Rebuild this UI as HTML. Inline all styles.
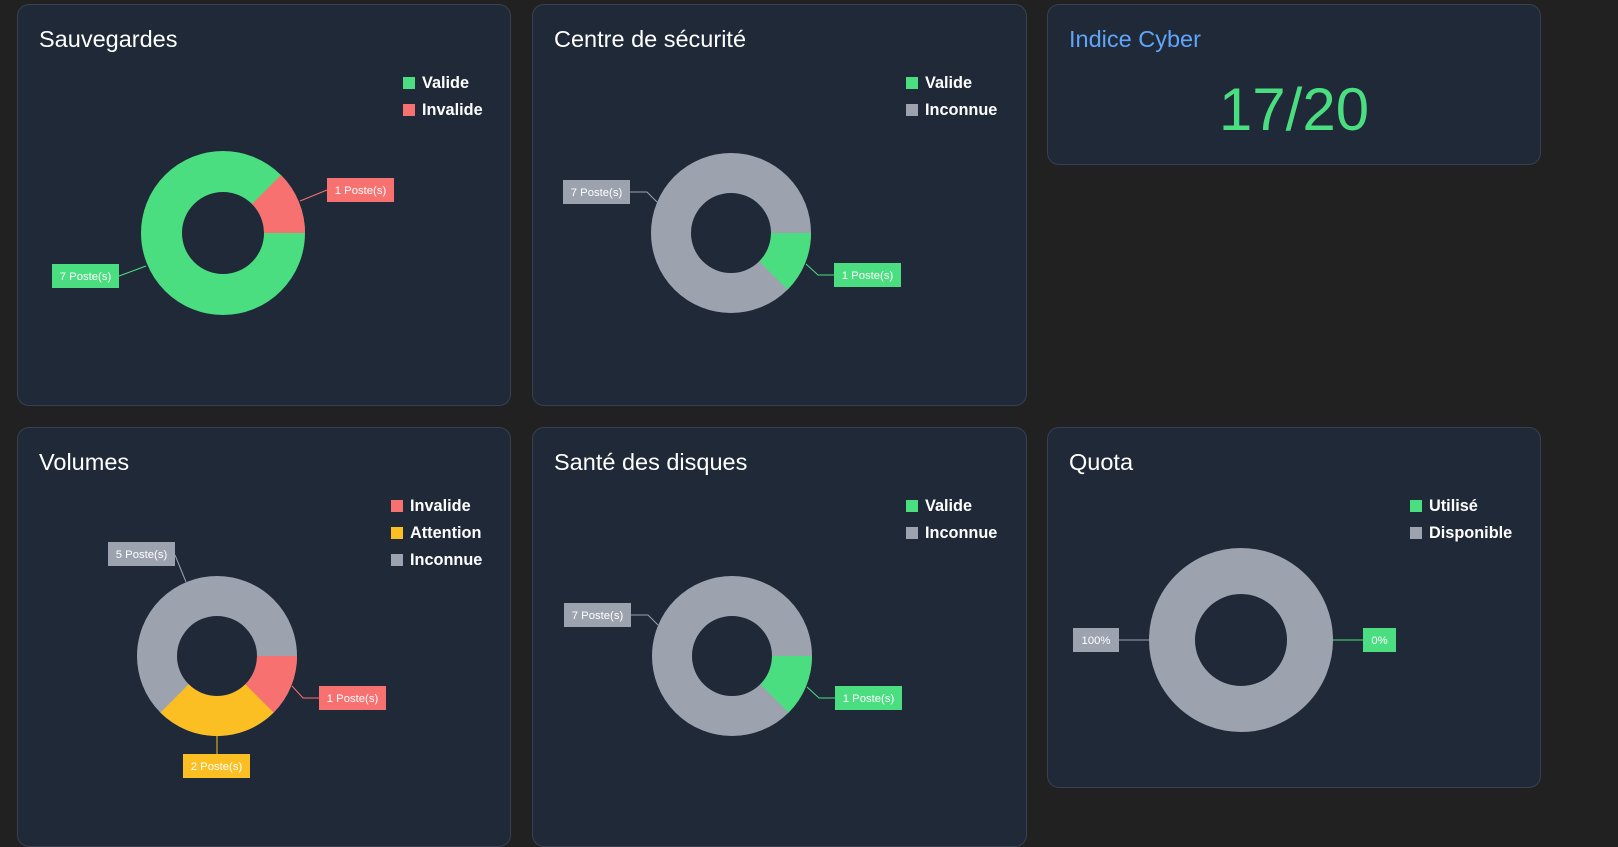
<!DOCTYPE html>
<html><head><meta charset="utf-8"><style>
html,body{margin:0;padding:0;background:#212121;width:1618px;height:817px;overflow:hidden;font-family:"Liberation Sans",Arial,sans-serif}
.card{position:absolute;background:#1f2937;border:1px solid #374151;border-radius:12px;box-sizing:border-box}
.t{position:absolute;left:21px;top:21px;font-size:23.5px;color:#fff}
svg{position:absolute;left:0;top:0}
</style></head><body>
<div class="card" style="left:17px;top:4px;width:494px;height:402px"><div class="t">Sauvegardes</div></div>
<div class="card" style="left:532px;top:4px;width:495px;height:402px"><div class="t">Centre de sécurité</div></div>
<div class="card" style="left:1047px;top:4px;width:494px;height:161px"><div class="t" style="color:#60a5fa">Indice Cyber</div>
<div style="position:absolute;left:0;right:0;top:70px;text-align:center;color:#4ade80;font-size:60px">17/20</div></div>
<div class="card" style="left:17px;top:427px;width:494px;height:420px"><div class="t">Volumes</div></div>
<div class="card" style="left:532px;top:427px;width:495px;height:420px"><div class="t">Santé des disques</div></div>
<div class="card" style="left:1047px;top:427px;width:494px;height:361px"><div class="t">Quota</div></div>
<svg width="1618" height="817" font-family="Liberation Sans, Arial, sans-serif">
<g font-size="16.3" font-weight="bold" fill="#fff">
<rect x="403" y="77" width="12" height="12" fill="#4ade80"/><text x="422" y="88">Valide</text>
<rect x="403" y="104" width="12" height="12" fill="#f87171"/><text x="422" y="115">Invalide</text>
<rect x="906" y="77" width="12" height="12" fill="#4ade80"/><text x="925" y="88">Valide</text>
<rect x="906" y="104" width="12" height="12" fill="#9ca3af"/><text x="925" y="115">Inconnue</text>
<rect x="391" y="500" width="12" height="12" fill="#f87171"/><text x="410" y="511">Invalide</text>
<rect x="391" y="527" width="12" height="12" fill="#fbbf24"/><text x="410" y="538">Attention</text>
<rect x="391" y="554" width="12" height="12" fill="#9ca3af"/><text x="410" y="565">Inconnue</text>
<rect x="906" y="500" width="12" height="12" fill="#4ade80"/><text x="925" y="511">Valide</text>
<rect x="906" y="527" width="12" height="12" fill="#9ca3af"/><text x="925" y="538">Inconnue</text>
<rect x="1410" y="500" width="12" height="12" fill="#4ade80"/><text x="1429" y="511">Utilisé</text>
<rect x="1410" y="527" width="12" height="12" fill="#9ca3af"/><text x="1429" y="538">Disponible</text>
</g>
<circle cx="223" cy="233" r="61.5" fill="none" stroke="#4ade80" stroke-width="41"/>
<path d="M305 233 A82 82 0 0 0 281 175 L252 204 A41 41 0 0 1 264 233 Z" fill="#f87171"/>
<circle cx="731" cy="233" r="60" fill="none" stroke="#9ca3af" stroke-width="40"/>
<path d="M811 233 A80 80 0 0 1 787.6 289.6 L759.3 261.3 A40 40 0 0 0 771 233 Z" fill="#4ade80"/>
<circle cx="732" cy="656" r="60" fill="none" stroke="#9ca3af" stroke-width="40"/>
<path d="M812 656 A80 80 0 0 1 788.6 712.6 L760.3 684.3 A40 40 0 0 0 772 656 Z" fill="#4ade80"/>
<circle cx="217" cy="656" r="60" fill="none" stroke="#9ca3af" stroke-width="40"/>
<path d="M297 656 A80 80 0 0 1 273.6 712.6 L245.3 684.3 A40 40 0 0 0 257 656 Z" fill="#f87171"/>
<path d="M273.6 712.6 A80 80 0 0 1 160.4 712.6 L188.7 684.3 A40 40 0 0 0 245.3 684.3 Z" fill="#fbbf24"/>
<circle cx="1241" cy="640" r="69" fill="none" stroke="#9ca3af" stroke-width="46"/>
<g fill="none" stroke-width="1">
<polyline points="300,201 327,190" stroke="#f87171"/>
<polyline points="119,276 146,266" stroke="#4ade80"/>
<polyline points="630,192 647,192 657,202" stroke="#9ca3af"/>
<polyline points="806,264 818,275 834,275" stroke="#4ade80"/>
<polyline points="631,615 648,615 658,625" stroke="#9ca3af"/>
<polyline points="807,687 819,698 835,698" stroke="#4ade80"/>
<polyline points="175,555 186,582" stroke="#9ca3af"/>
<polyline points="292,686 303,698 319,698" stroke="#f87171"/>
<polyline points="217,736 217,754" stroke="#fbbf24"/>
<polyline points="1119,640 1149,640" stroke="#9ca3af"/>
<polyline points="1333,640 1363,640" stroke="#4ade80"/>
</g>
<g font-size="11.3" fill="#fff" text-anchor="middle">
<rect x="327" y="178" width="67" height="24" fill="#f87171"/><text x="360.5" y="194">1 Poste(s)</text>
<rect x="52" y="264" width="67" height="24" fill="#4ade80"/><text x="85.5" y="280">7 Poste(s)</text>
<rect x="563" y="180" width="67" height="24" fill="#9ca3af"/><text x="596.5" y="196">7 Poste(s)</text>
<rect x="834" y="263" width="67" height="24" fill="#4ade80"/><text x="867.5" y="279">1 Poste(s)</text>
<rect x="564" y="603" width="67" height="24" fill="#9ca3af"/><text x="597.5" y="619">7 Poste(s)</text>
<rect x="835" y="686" width="67" height="24" fill="#4ade80"/><text x="868.5" y="702">1 Poste(s)</text>
<rect x="108" y="542" width="67" height="24" fill="#9ca3af"/><text x="141.5" y="558">5 Poste(s)</text>
<rect x="319" y="686" width="67" height="24" fill="#f87171"/><text x="352.5" y="702">1 Poste(s)</text>
<rect x="183" y="754" width="67" height="24" fill="#fbbf24"/><text x="216.5" y="770">2 Poste(s)</text>
<rect x="1073" y="628" width="46" height="24" fill="#9ca3af"/><text x="1096" y="644">100%</text>
<rect x="1363" y="628" width="33" height="24" fill="#4ade80"/><text x="1379.5" y="644">0%</text>
</g>
</svg>
</body></html>
